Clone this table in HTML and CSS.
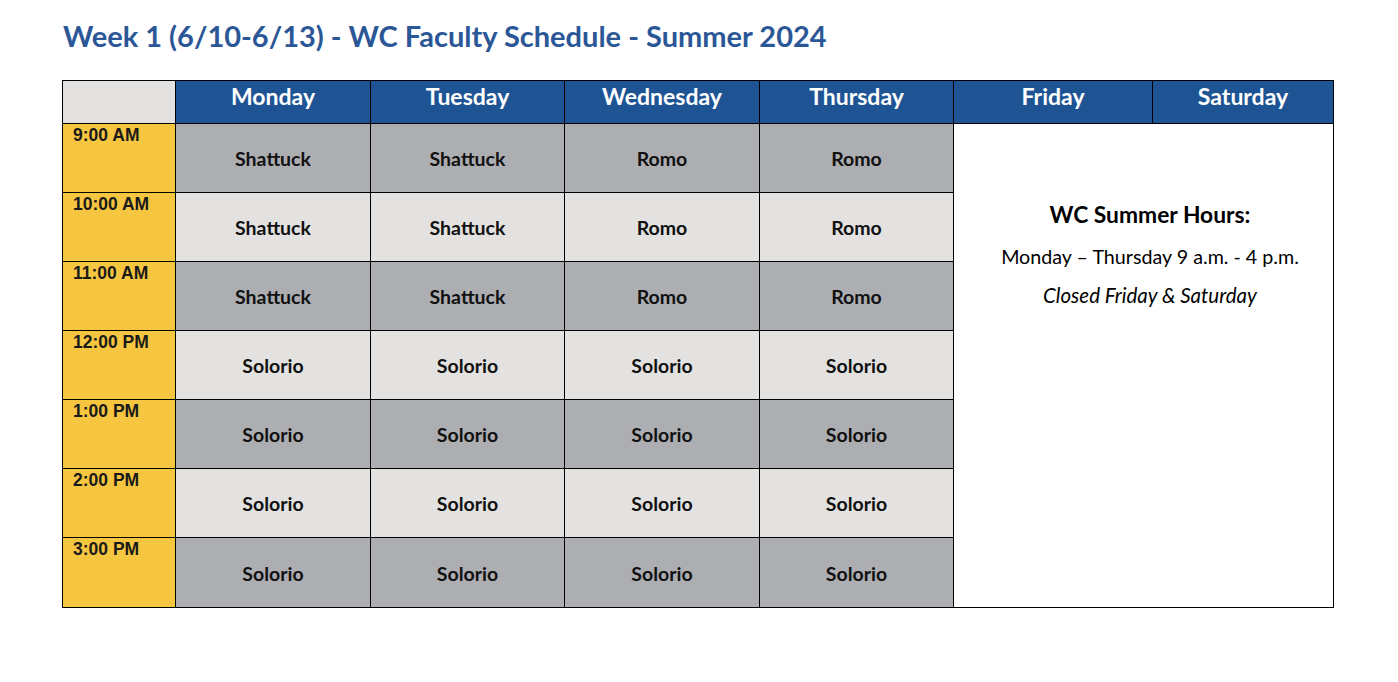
FILE: index.html
```html
<!DOCTYPE html>
<html lang="en">
<head>
<meta charset="utf-8">
<title>Week 1 - WC Faculty Schedule - Summer 2024</title>
<link rel="stylesheet" href="styles.css">
</head>
<body>
<div class="page">
  <h1 class="title">Week 1 (6/10-6/13) - WC Faculty Schedule - Summer 2024</h1>
  <div class="schedule">
    <div class="corner"></div>
    <div class="day">Monday</div>
    <div class="day">Tuesday</div>
    <div class="day">Wednesday</div>
    <div class="day">Thursday</div>
    <div class="day">Friday</div>
    <div class="day">Saturday</div>

    <div class="time">9:00 AM</div>
    <div class="slot dark">Shattuck</div>
    <div class="slot dark">Shattuck</div>
    <div class="slot dark">Romo</div>
    <div class="slot dark">Romo</div>
    <div class="hours">
      <div class="hours-title">WC Summer Hours:</div>
      <div class="hours-line">Monday – Thursday 9 a.m. - 4 p.m.</div>
      <div class="hours-closed">Closed Friday &amp; Saturday</div>
    </div>

    <div class="time">10:00 AM</div>
    <div class="slot light">Shattuck</div>
    <div class="slot light">Shattuck</div>
    <div class="slot light">Romo</div>
    <div class="slot light">Romo</div>

    <div class="time">11:00 AM</div>
    <div class="slot dark">Shattuck</div>
    <div class="slot dark">Shattuck</div>
    <div class="slot dark">Romo</div>
    <div class="slot dark">Romo</div>

    <div class="time">12:00 PM</div>
    <div class="slot light">Solorio</div>
    <div class="slot light">Solorio</div>
    <div class="slot light">Solorio</div>
    <div class="slot light">Solorio</div>

    <div class="time">1:00 PM</div>
    <div class="slot dark">Solorio</div>
    <div class="slot dark">Solorio</div>
    <div class="slot dark">Solorio</div>
    <div class="slot dark">Solorio</div>

    <div class="time">2:00 PM</div>
    <div class="slot light">Solorio</div>
    <div class="slot light">Solorio</div>
    <div class="slot light">Solorio</div>
    <div class="slot light">Solorio</div>

    <div class="time">3:00 PM</div>
    <div class="slot dark">Solorio</div>
    <div class="slot dark">Solorio</div>
    <div class="slot dark">Solorio</div>
    <div class="slot dark">Solorio</div>
  </div>
</div>
</body>
</html>
```

FILE: styles.css
```css
html, body {
  margin: 0;
  padding: 0;
  background: #ffffff;
}

.page {
  padding: 16px 0 0 62px;
  font-family: Lato, "Open Sans", "Liberation Sans", sans-serif;
}

.title {
  margin: 0 0 24px 1px;
  font-size: 29px;
  line-height: 40px;
  font-weight: 700;
  color: #2b5797;
}

.schedule {
  display: grid;
  grid-template-columns: 113px 195px 194px 195px 194px 199px 181px;
  grid-template-rows: 43px repeat(6, 69px) 70px;
  width: 1271px;
  border-left: 1px solid #000;
  border-top: 1px solid #000;
}

.schedule > div {
  border-right: 1px solid #000;
  border-bottom: 1px solid #000;
  box-sizing: border-box;
}

.corner {
  background: #e3e2e1;
}

.day {
  background: #1f5494;
  color: #ffffff;
  font-weight: 700;
  font-size: 23px;
  display: flex;
  align-items: center;
  justify-content: center;
  padding-bottom: 12px;
}

.time {
  background: #f7c640;
  font-family: "Liberation Sans", Arial, sans-serif;
  font-weight: 700;
  font-size: 17.5px;
  color: #1a1a1a;
  padding: 1px 0 0 10px;
}

.slot {
  display: flex;
  align-items: center;
  justify-content: center;
  font-weight: 700;
  font-size: 19.5px;
  color: #111;
  padding-top: 1px;
}

.slot.dark {
  background: #adaeb2;
}

.slot.light {
  background: #e3e2e0;
}

.hours {
  grid-column: 6 / span 2;
  grid-row: 2 / span 7;
  background: #ffffff;
  display: flex;
  flex-direction: column;
  align-items: center;
  padding: 76px 0 0 13px;
  color: #000;
}

.hours-title {
  font-weight: 700;
  font-size: 22.8px;
  line-height: 28px;
}

.hours-line {
  margin-top: 17px;
  font-size: 19.7px;
  line-height: 24px;
}

.hours-closed {
  margin-top: 14px;
  font-size: 20.5px;
  line-height: 24px;
  font-style: italic;
}
```
